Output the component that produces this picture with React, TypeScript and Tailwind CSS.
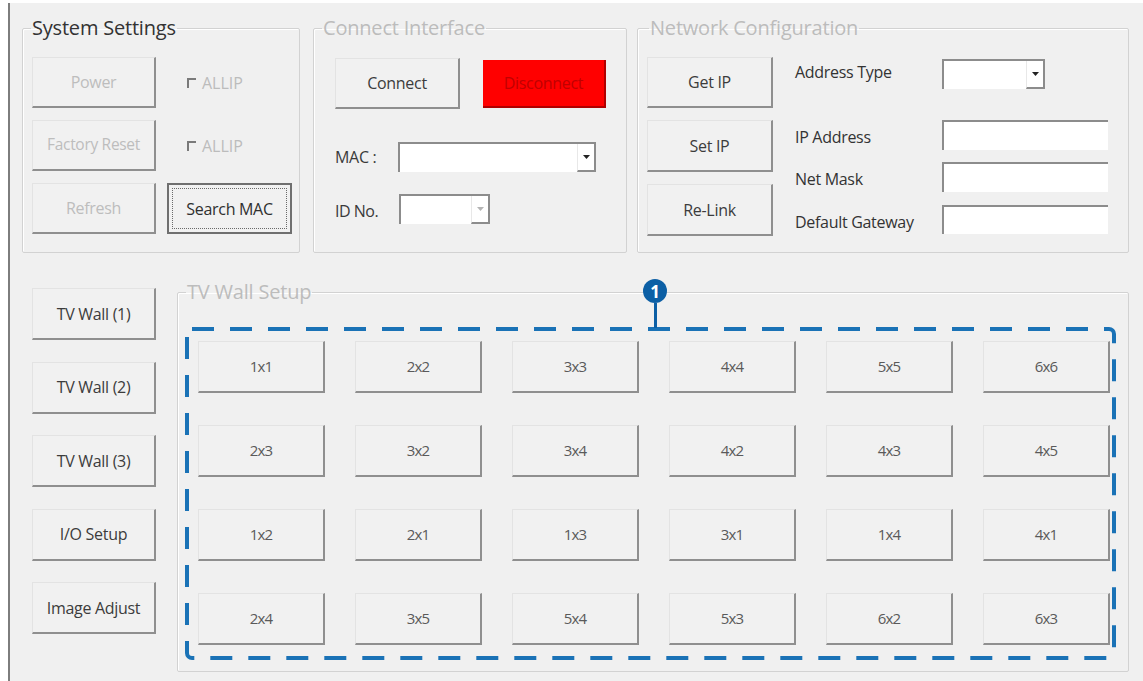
import React from "react";

const uiFont = { fontFamily: '"Open Sans", "Noto Sans", "DejaVu Sans", sans-serif' };

type WinButtonProps = {
  label: string;
  className?: string;
  disabled?: boolean;
};

// classic raised push button: light top/left edge, dark bottom/right edge
function WinButton({ label, className = "", disabled }: WinButtonProps) {
  return (
    <button
      type="button"
      className={`flex items-center justify-center bg-[#f1f1f1] border-t border-l border-t-[#e3e3e3] border-l-[#e3e3e3] border-r-2 border-b-2 border-r-[#8f8f8f] border-b-[#8f8f8f] tracking-[-0.3px] ${
        disabled ? "text-[#bdbdbd]" : "text-[#3c3c3c]"
      } ${className}`}
    >
      {label}
    </button>
  );
}

type GroupProps = {
  title: string;
  strong?: boolean;
  className?: string;
  bodyClass?: string;
  legendClass?: string;
  children: React.ReactNode;
};

function Group({ title, strong, className = "", bodyClass = "", legendClass = "ml-[8px]", children }: GroupProps) {
  return (
    <fieldset
      className={`border border-[#d2d2d2] rounded-[2px] shadow-[inset_1px_1px_0_#ffffff] ${className}`}
    >
      <legend
        className={`px-[1px] leading-[26px] text-[20px] tracking-[-0.2px] ${legendClass} ${
          strong ? "text-[#333333]" : "text-[#bcbcbc]"
        }`}
      >
        {title}
      </legend>
      <div className={bodyClass}>{children}</div>
    </fieldset>
  );
}

function ArrowDown({ light }: { light?: boolean }) {
  return (
    <svg width="7" height="4" viewBox="0 0 7 4">
      <path d="M0 0h7L3.5 4z" fill={light ? "#b4b4b4" : "#222222"} />
    </svg>
  );
}

function Combo({ className = "", light }: { className?: string; light?: boolean }) {
  return (
    <div
      className={`flex bg-white border-t-2 border-l-2 border-r-2 border-[#8c8c8c] ${className}`}
    >
      <div className="flex-1" />
      <div className="w-[17px] flex items-center justify-center border-b-2 border-[#8c8c8c] border-l border-l-[#e8e8e8]">
        <ArrowDown light={light} />
      </div>
    </div>
  );
}

function TextBox({ className = "" }: { className?: string }) {
  return <div className={`bg-white border-t-2 border-l-2 border-[#8c8c8c] ${className}`} />;
}

function AllIp() {
  return (
    <div className="flex items-center gap-[6px] pl-[20px] text-[16px] text-[#bcbcbc]">
      <span className="w-[9px] h-[10px] border-t-2 border-l-2 border-[#7a7a7a]" />
      <span>ALLIP</span>
    </div>
  );
}

const wallSizes = [
  ["1x1", "2x2", "3x3", "4x4", "5x5", "6x6"],
  ["2x3", "3x2", "3x4", "4x2", "4x3", "4x5"],
  ["1x2", "2x1", "1x3", "3x1", "1x4", "4x1"],
  ["2x4", "3x5", "5x4", "5x3", "6x2", "6x3"],
];

const sideMenu = ["TV Wall (1)", "TV Wall (2)", "TV Wall (3)", "I/O Setup", "Image Adjust"];

export default function App() {
  return (
    <div className="w-[1143px] h-[681px] bg-white overflow-hidden" style={uiFont}>
      <div className="ml-[8px] mt-[3px] h-[678px] border-l-2 border-[#7d7d7d] bg-[#f0f0f0] pl-[12px] pt-[12px]">
        {/* top row of groups */}
        <div className="flex items-start">
          <Group
            title="System Settings"
            strong
            className="w-[278px] h-[238px]"
            bodyClass="pl-[9px] pt-[16px]"
          >
            <div className="grid grid-cols-[124px_125px] gap-x-[11px] gap-y-[12px] text-[16px]">
              <WinButton label="Power" disabled className="h-[51px]" />
              <AllIp />
              <WinButton label="Factory Reset" disabled className="h-[51px] text-[15.5px]" />
              <AllIp />
              <WinButton label="Refresh" disabled className="h-[51px]" />
              <div className="h-[51px] border-2 border-[#6f6f6f] bg-[#f1f1f1] p-[3px] flex">
                <div className="flex-1 border border-dotted border-[#6a6a6a] flex items-center justify-center text-[16px] tracking-[-0.3px] text-[#2f2f2f]">
                  Search MAC
                </div>
              </div>
            </div>
          </Group>

          <Group
            title="Connect Interface"
            className="ml-[13px] w-[314px] h-[238px]"
            bodyClass="pl-[21px] pt-[17px] text-[16px]"
          >
            <div className="flex items-start">
              <WinButton label="Connect" className="w-[125px] h-[51px]" />
              <div className="ml-[23px] mt-[2px] w-[123px] h-[48px] bg-[#ff0000] border-r-2 border-b-2 border-[#b00000] flex items-center justify-center text-[#c00000] tracking-[-0.3px]">
                Disconnect
              </div>
            </div>
            <div className="mt-[33px] flex items-center">
              <span className="w-[63px] text-[#3a3a3a] tracking-[-0.3px]">MAC :</span>
              <Combo className="w-[198px] h-[30px]" />
            </div>
            <div className="mt-[22px] flex items-center">
              <span className="w-[64px] text-[#3a3a3a] pt-[4px] tracking-[-0.5px]">ID No.</span>
              <Combo light className="w-[91px] h-[30px]" />
            </div>
          </Group>

          <Group
            title="Network Configuration"
            legendClass="ml-[11px]"
            className="ml-[10px] w-[492px] h-[238px]"
            bodyClass="pl-[9px] pt-[16px] text-[16px]"
          >
            <div className="flex">
              <div className="w-[126px] flex flex-col gap-[12px]">
                <WinButton label="Get IP" className="h-[51px]" />
                <WinButton label="Set IP" className="h-[52px]" />
                <WinButton label="Re-Link" className="h-[52px]" />
              </div>
              <div className="ml-[22px] flex flex-col text-[#333333] tracking-[-0.3px]">
                <div className="mt-[1px] h-[31px] flex items-center">
                  <span className="w-[147px] pb-[4px]">Address Type</span>
                  <Combo className="w-[103px] h-[30px]" />
                </div>
                <div className="mt-[31px] h-[30px] flex items-center">
                  <span className="w-[147px] pt-[4px]">IP Address</span>
                  <TextBox className="w-[166px] h-[30px]" />
                </div>
                <div className="mt-[12px] h-[30px] flex items-center">
                  <span className="w-[147px] pt-[4px]">Net Mask</span>
                  <TextBox className="w-[166px] h-[30px]" />
                </div>
                <div className="mt-[12px] h-[30px] flex items-center">
                  <span className="w-[147px] pt-[6px]">Default Gateway</span>
                  <TextBox className="w-[166px] h-[29px]" />
                </div>
              </div>
            </div>
          </Group>
        </div>

        {/* lower area: side menu + tv wall layouts */}
        <div className="mt-[26px] flex items-start">
          <div className="ml-[10px] pt-[9px] w-[124px] flex flex-col gap-[21.5px] text-[16px]">
            {sideMenu.map((m) => (
              <WinButton key={m} label={m} className="h-[52px]" />
            ))}
          </div>

          <Group
            title="TV Wall Setup"
            className="ml-[21px] w-[952px] h-[393px]"
            bodyClass="pl-[20px] pt-[36px]"
          >
            <div className="relative w-[912px]">
              <div className="grid grid-cols-6 gap-x-[30px] gap-y-[32px] text-[15px]">
                {wallSizes.flat().map((s) => (
                  <WinButton key={s} label={s} className="h-[52px] !text-[#5a5a5a] !tracking-[-0.8px]" />
                ))}
              </div>

              {/* dashed callout frame around the layout buttons */}
              <svg
                className="absolute left-[-13px] top-[-14px] pointer-events-none"
                width="931"
                height="333"
                viewBox="0 0 931 333"
              >
                <rect
                  x="2"
                  y="2"
                  width="927"
                  height="329"
                  rx="5"
                  fill="none"
                  stroke="#1a72b6"
                  strokeWidth="4"
                  strokeDasharray="22 16"
                />
              </svg>

              {/* callout marker */}
              <div className="absolute left-[445px] top-[-62px] flex flex-col items-center">
                <div className="w-[24px] h-[24px] rounded-full bg-[#0c5fa5] flex items-center justify-center text-white text-[17px] font-bold leading-none">
                  1
                </div>
                <div className="w-[3px] h-[25px] bg-[#0c5fa5]" />
              </div>
            </div>
          </Group>
        </div>
      </div>
    </div>
  );
}
